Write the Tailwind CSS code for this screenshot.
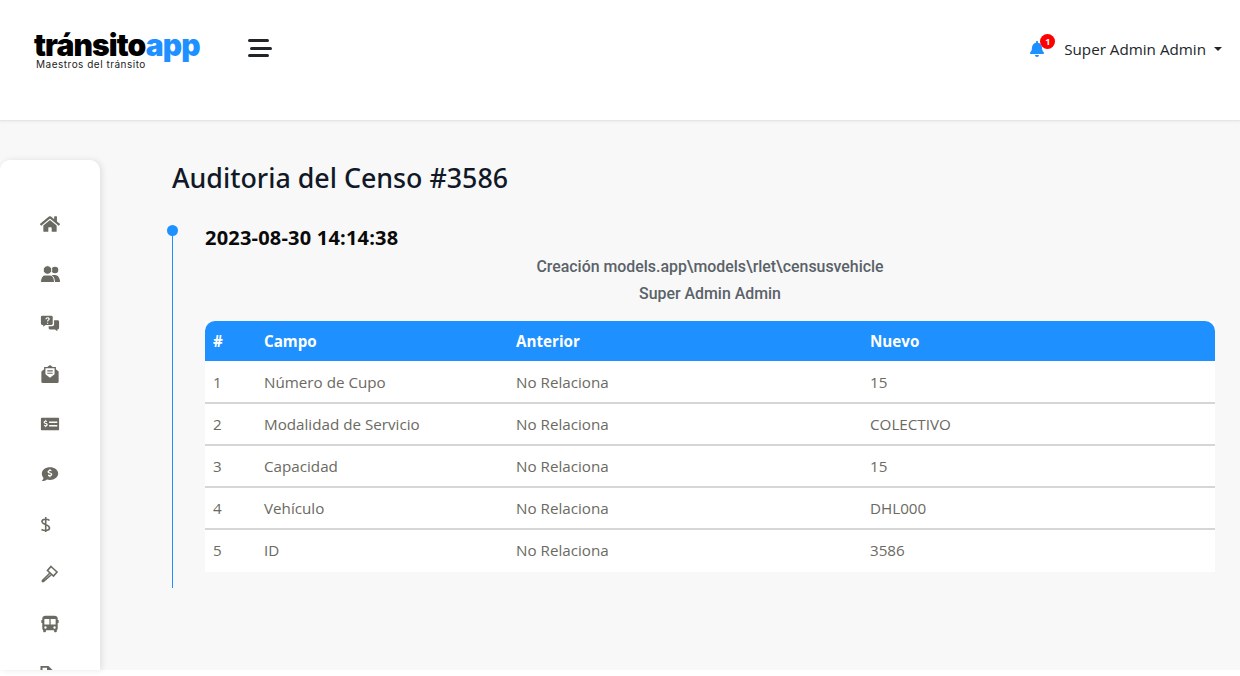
<!DOCTYPE html>
<html lang="en">

<head>
    <meta charset="UTF-8" />
    <meta name="viewport" content="width=device-width, initial-scale=1.0" />
    <title>Auditoria del Censo</title>
    <script src="https://cdn.jsdelivr.net/npm/@tailwindcss/browser@4"></script>
</head>

<body class="bg-white h-[676px] overflow-hidden font-['Open_Sans',sans-serif]">
    <!-- top bar -->
    <header class="h-[121px] bg-white border-b border-[#e6e6e6] shadow-[0_1px_3px_rgba(0,0,0,0.05)] flex items-start relative z-10">
        <div class="w-[248px] pl-[34px] pt-[31px]">
            <div class="text-[30px] leading-[28px] font-black font-['Inter',sans-serif] tracking-[-0.9px] text-black">tránsito<span class="text-[#1e90ff]">app</span></div>
            <div class="text-[10px] leading-[10px] pl-[2px] text-[#222] font-['Inter',sans-serif] tracking-[0.5px]">Maestros del tránsito</div>
        </div>
        <button class="mt-[39px] flex flex-col gap-[4.5px] items-start w-[24px]">
            <span class="block h-[3px] w-[21px] rounded bg-[#212529]"></span>
            <span class="block h-[3px] w-[22px] ml-[2px] rounded bg-[#212529]"></span>
            <span class="block h-[3px] w-[21px] rounded bg-[#212529]"></span>
        </button>
        <div class="ml-auto mt-[39px] mr-[18px] flex items-center relative">
            <svg class="w-[14px] h-[16px] fill-[#1e90ff] mr-[20px]" viewBox="0 0 448 512"><path d="M224 512c35.32 0 63.97-28.65 63.97-64H160.03c0 35.35 28.65 64 63.97 64zm215.39-149.71c-19.32-20.76-55.47-51.99-55.47-154.29 0-77.7-54.48-139.9-127.94-155.16V32c0-17.67-14.32-32-31.98-32s-31.98 14.33-31.98 32v20.84C118.56 68.1 64.08 130.3 64.08 208c0 102.3-36.15 133.53-55.47 154.29-6 6.45-8.66 14.16-8.61 21.71.11 16.4 12.98 32 32.1 32h383.8c19.12 0 32-15.6 32.1-32 .05-7.55-2.61-15.27-8.61-21.71z"/></svg>
            <span class="absolute left-[10px] -top-[5px] w-[15px] h-[15px] rounded-full bg-[#f00] text-white text-[9px] leading-[15px] font-bold text-center">1</span>
            <span class="text-[15.2px] leading-[20px] text-[#212529]">Super Admin Admin</span>
            <span class="ml-[8px] w-0 h-0 border-x-[4px] border-x-transparent border-t-[4px] border-t-[#212529]"></span>
        </div>
    </header>

    <div class="h-[549px] bg-[#f8f8f8] flex">
        <!-- side menu -->
        <aside class="mt-[39px] w-[100px] h-[510px] bg-white rounded-t-[10px] shadow-[2px_0_6px_rgba(0,0,0,0.1)] overflow-hidden shrink-0 pl-[40px] pt-[54px] flex flex-col gap-[30px] text-[#6b6a62]">
            <svg class="w-[20px] h-[20px] shrink-0 fill-current" viewBox="0 0 576 512"><path d="M280.37 148.26L96 300.11V464a16 16 0 0 0 16 16l112.06-.29a16 16 0 0 0 15.92-16V368a16 16 0 0 1 16-16h64a16 16 0 0 1 16 16v95.64a16 16 0 0 0 16 16.05L464 480a16 16 0 0 0 16-16V300L295.67 148.26a12.19 12.19 0 0 0-15.3 0zM571.6 251.47L488 182.56V44.05a12 12 0 0 0-12-12h-56a12 12 0 0 0-12 12v72.61L318.47 43a48 48 0 0 0-61 0L4.34 251.47a12 12 0 0 0-1.6 16.9l25.5 31A12 12 0 0 0 45.15 301l235.22-193.74a12.19 12.19 0 0 1 15.3 0L530.9 301a12 12 0 0 0 16.9-1.6l25.5-31a12 12 0 0 0-1.7-16.93z"/></svg>
            <svg class="w-[20px] h-[20px] shrink-0 fill-current" viewBox="0 0 20 20"><circle cx="15" cy="6" r="3.300"/><path d="M12 11h3c2.800 0 5 2.800 5 7h-8z"/><g class="stroke-white" stroke-width="1"><circle cx="7.500" cy="6" r="4.300"/><path d="M0.500 18.500c0-4.500 2-7.500 4.500-7.500h5c2.500 0 4.500 3 4.500 7.500z"/></g></svg>
            <svg class="w-[20px] h-[20px] shrink-0 fill-current" viewBox="-1 -1 22 22"><path fill-rule="evenodd" d="M1.500 1h10a1.500 1.500 0 0 1 1.500 1.500v7a1.500 1.500 0 0 1-1.500 1.500H5l-2.500 2v-2h-1A1.500 1.500 0 0 1 0 9.500v-7A1.500 1.500 0 0 1 1.500 1zM5 4.800h1.400c.1-.7.500-1 1-1s.9.300.9.800c0 .9-1.600 1.100-1.600 2.600h1.300c0-1 1.700-1.300 1.700-2.700C9.700 3.300 8.700 2.700 7.400 2.700 6 2.700 5.100 3.500 5 4.800zM6.700 8.500v1.200h1.300V8.500z"/><path d="M14.500 6h4A1.500 1.500 0 0 1 20 7.500v7a1.500 1.500 0 0 1-1.500 1.500H18v2l-2.500-2H10a1.500 1.500 0 0 1-1.500-1.500V12.500h4a2 2 0 0 0 2-2z"/></svg>
            <svg class="w-[20px] h-[20px] shrink-0 fill-current" viewBox="-1 -1 22 22"><path fill-rule="evenodd" d="M10 0l3 2.200h3.500v2.700l3 2.300v11.300a1.500 1.500 0 0 1-1.500 1.500H2a1.500 1.500 0 0 1-1.500-1.500V7.200l3-2.300V2.200H7zM5 3.700v6.600l5 3.700 5-3.700V3.700zM7 6h6v1.200H7zm0 2.500h6v1.200H7z"/></svg>
            <svg class="w-[20px] h-[20px] shrink-0 fill-current" viewBox="-1 -1 22 22"><path fill-rule="evenodd" d="M1 3h18a1 1 0 0 1 1 1v12a1 1 0 0 1-1 1H1a1 1 0 0 1-1-1V4a1 1 0 0 1 1-1zM4.800 5.200v1.100C3.600 6.400 3 7.200 3 8.100c0 2.100 3.200 1.600 3.200 2.700 0 .8-1.800.6-2.700.1v1.300c.4.200.8.300 1.300.3v1.100h1v-1.100c1.100-.2 1.700-.9 1.700-1.800 0-2.100-3.200-1.600-3.200-2.600 0-.7 1.400-.6 2.400-.2V6.600c-.3-.1-.7-.2-1.100-.2V5.200zM9 7.300v1.600h9V7.300zm0 3.800v1.600h9v-1.600z"/></svg>
            <svg class="w-[20px] h-[20px] shrink-0 fill-current" viewBox="-1 -1 22 22"><path fill-rule="evenodd" d="M10 2.500c5 0 9 3 9 7s-4 7-9 7c-1.200 0-2.300-.2-3.300-.5C5.500 17 3 17.800 1 17.800c1-1 1.700-2.300 1.900-3.400C1.700 13.100 1 11.400 1 9.500c0-4 4-7 9-7zM9.300 4.500v1.100C8 5.800 7.300 6.600 7.300 7.600c0 2.200 3.600 1.700 3.600 2.900 0 .9-2 .7-3.100.1v1.500c.4.200 1 .3 1.500.3v1.100h1.200v-1.100c1.200-.2 2-1 2-2.100 0-2.300-3.600-1.800-3.600-2.900 0-.8 1.600-.7 2.700-.2V6c-.4-.2-.8-.3-1.100-.3V4.500z"/></svg>
            <svg class="w-[20px] h-[20px] shrink-0 fill-none stroke-current" viewBox="0 0 20 20" stroke-width="1.600"><path d="M9.500 6.500C8 5 2 4.500 2 7.500c0 3.500 7.500 2.500 7.500 6.500 0 3-5.500 3-8 1.500M5.700 3v15"/></svg>
            <svg class="w-[20px] h-[20px] shrink-0 fill-none stroke-current" viewBox="0 0 20 20" stroke-width="1.600"><path d="M11 2.500l6 5.500-3.500 4-6-5.500zM9.500 9.500L2.500 16.500c-.6.8.3 1.600 1 1L11 11"/></svg>
            <svg class="w-[20px] h-[20px] shrink-0 fill-current" viewBox="-1 -1 22 22"><path fill-rule="evenodd" d="M5 1h10c2 0 3.500 1 3.500 3v1.500h1v3.500h-1v6c0 .8-.4 1.300-1 1.600V18a1 1 0 0 1-1 1h-1a1 1 0 0 1-1-1v-1H5.500v1a1 1 0 0 1-1 1h-1a1 1 0 0 1-1-1v-1.400c-.6-.3-1-.8-1-1.600V9h-1V5.500h1V4c0-2 1.500-3 3.500-3zM3.800 4.500v6h5.500v-6zm6.900 0v6h5.500v-6zM5 12.500a1.300 1.300 0 1 0 0 2.600 1.300 1.300 0 0 0 0-2.600zm10 0a1.300 1.300 0 1 0 0 2.600 1.300 1.300 0 0 0 0-2.600z"/></svg>
            <svg class="w-[20px] h-[20px] shrink-0 fill-current" viewBox="0 0 20 20"><path fill-rule="evenodd" d="M0.500 2h8l4 4v14h-12zM2.500 3.700v2.300h4.500V3.700z"/></svg>
        </aside>

        <main class="flex-1 pl-[72px] pr-[25px]">
            <h1 class="mt-[39px] text-[26.8px] leading-[36px] font-['Noto_Sans',sans-serif] font-medium text-[#111827]">Auditoria del Censo #3586</h1>
            <!-- timeline -->
            <div class="relative mt-[17px] h-[375px] pl-[33px] pt-[13px]">
                <span class="absolute left-0 top-[14px] bottom-0 w-px bg-[#1e90ff]"></span>
                <span class="absolute -left-[5px] top-[12px] w-[11px] h-[11px] rounded-full bg-[#1e90ff]"></span>
                <h2 class="text-[20px] leading-[24px] font-bold tracking-[0.2px] text-[#0a0a0a]">2023-08-30 14:14:38</h2>
                <div class="mt-[3px] text-center font-['Roboto',sans-serif] font-medium text-[15.9px] leading-[27px] text-[#5a6268]">
                    <p>Creación models.app\models\rlet\censusvehicle</p>
                    <p>Super Admin Admin</p>
                </div>
                <table class="mt-[14px] w-full table-fixed text-[15.2px] text-[#6b6a62] bg-white border-separate border-spacing-0">
                    <thead>
                        <tr class="h-[40px] bg-[#1e90ff] text-white text-left font-bold">
                            <th class="w-[51px] pl-[8px] rounded-tl-[10px]">#</th>
                            <th class="w-[252px] pl-[8px]">Campo</th>
                            <th class="w-[354px] pl-[8px]">Anterior</th>
                            <th class="pl-[8px] rounded-tr-[10px]">Nuevo</th>
                        </tr>
                    </thead>
                    <tbody>
                        <tr class="h-[43px]">
                            <td class="pl-[8px] pt-[2px] border-b-2 border-[#d6d6d6]">1</td>
                            <td class="pl-[8px] pt-[2px] border-b-2 border-[#d6d6d6]">Número de Cupo</td>
                            <td class="pl-[8px] pt-[2px] border-b-2 border-[#d6d6d6]">No Relaciona</td>
                            <td class="pl-[8px] pt-[2px] border-b-2 border-[#d6d6d6]">15</td>
                        </tr>
                        <tr class="h-[42px]">
                            <td class="pl-[8px] border-b-2 border-[#d6d6d6]">2</td>
                            <td class="pl-[8px] border-b-2 border-[#d6d6d6]">Modalidad de Servicio</td>
                            <td class="pl-[8px] border-b-2 border-[#d6d6d6]">No Relaciona</td>
                            <td class="pl-[8px] border-b-2 border-[#d6d6d6]">COLECTIVO</td>
                        </tr>
                        <tr class="h-[42px]">
                            <td class="pl-[8px] border-b-2 border-[#d6d6d6]">3</td>
                            <td class="pl-[8px] border-b-2 border-[#d6d6d6]">Capacidad</td>
                            <td class="pl-[8px] border-b-2 border-[#d6d6d6]">No Relaciona</td>
                            <td class="pl-[8px] border-b-2 border-[#d6d6d6]">15</td>
                        </tr>
                        <tr class="h-[42px]">
                            <td class="pl-[8px] border-b-2 border-[#d6d6d6]">4</td>
                            <td class="pl-[8px] border-b-2 border-[#d6d6d6]">Vehículo</td>
                            <td class="pl-[8px] border-b-2 border-[#d6d6d6]">No Relaciona</td>
                            <td class="pl-[8px] border-b-2 border-[#d6d6d6]">DHL000</td>
                        </tr>
                        <tr class="h-[42px]">
                            <td class="pl-[8px] pb-[2px]">5</td>
                            <td class="pl-[8px] pb-[2px]">ID</td>
                            <td class="pl-[8px] pb-[2px]">No Relaciona</td>
                            <td class="pl-[8px] pb-[2px]">3586</td>
                        </tr>
                    </tbody>
                </table>
            </div>
        </main>
    </div>
</body>

</html>
